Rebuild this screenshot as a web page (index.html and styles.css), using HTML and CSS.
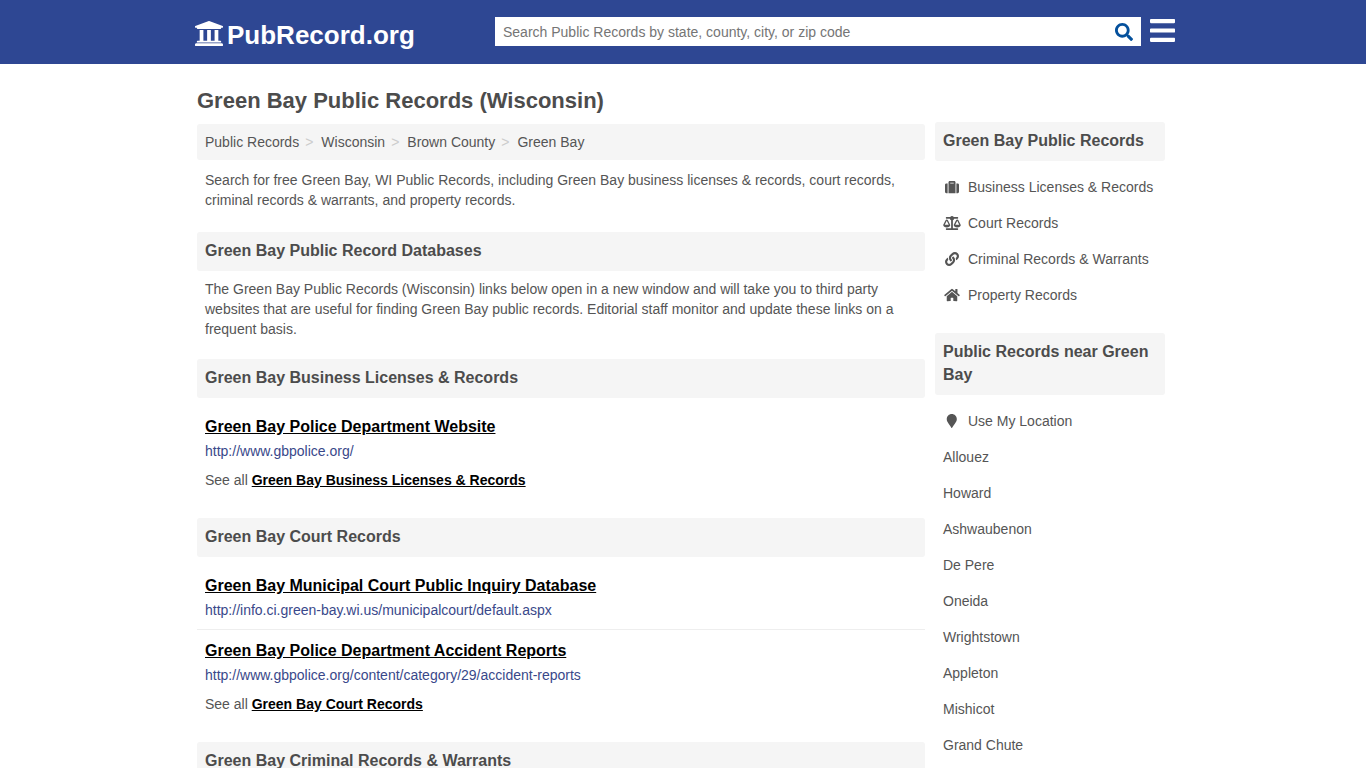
FILE: index.html
```html
<!DOCTYPE html>
<html lang="en">

<head>
	<meta charset="UTF-8">
	<meta name="viewport" content="width=device-width, initial-scale=1.0">
	<title>Green Bay Public Records (Wisconsin)</title>
	<link rel="stylesheet" href="styles.css">
</head>

<body>
	<!-- header -->
	<header class="top">
		<div class="top-in">
			<a class="logo" href="#">
				<svg class="logo-icon" viewBox="16 32 480 448" preserveAspectRatio="none"><path d="M496 128v16a8 8 0 0 1-8 8h-24v12c0 6.627-5.373 12-12 12H60c-6.627 0-12-5.373-12-12v-12H24a8 8 0 0 1-8-8v-16a8 8 0 0 1 4.941-7.392l232-88a7.996 7.996 0 0 1 6.118 0l232 88A8 8 0 0 1 496 128zm-24 304H40c-13.255 0-24 10.745-24 24v16a8 8 0 0 0 8 8h464a8 8 0 0 0 8-8v-16c0-13.255-10.745-24-24-24zM96 192v192H60c-6.627 0-12 5.373-12 12v20h416v-20c0-6.627-5.373-12-12-12h-36V192h-64v192h-64V192h-64v192h-64V192H96z"/></svg>
				<span class="logo-text">PubRecord.org</span>
			</a>
			<form class="search">
				<input class="search-input" type="text" placeholder="Search Public Records by state, county, city, or zip code">
				<svg class="search-icon" viewBox="0 0 512 512"><path d="M505 442.7L405.3 343c-4.5-4.5-10.6-7-17-7H372c27.6-35.3 44-79.7 44-128C416 93.1 322.9 0 208 0S0 93.1 0 208s93.1 208 208 208c48.3 0 92.7-16.4 128-44v16.3c0 6.4 2.5 12.5 7 17l99.7 99.7c9.4 9.4 24.6 9.4 33.9 0l28.3-28.3c9.4-9.4 9.4-24.6.1-34zM208 336c-70.7 0-128-57.2-128-128 0-70.7 57.2-128 128-128 70.7 0 128 57.2 128 128 0 70.7-57.2 128-128 128z"/></svg>
			</form>
			<svg class="menu-icon" viewBox="0 60 448 392" preserveAspectRatio="none"><path d="M16 132h416c8.837 0 16-7.163 16-16V76c0-8.837-7.163-16-16-16H16C7.163 60 0 67.163 0 76v40c0 8.837 7.163 16 16 16zm0 160h416c8.837 0 16-7.163 16-16v-40c0-8.837-7.163-16-16-16H16c-8.837 0-16 7.163-16 16v40c0 8.837 7.163 16 16 16zm0 160h416c8.837 0 16-7.163 16-16v-40c0-8.837-7.163-16-16-16H16c-8.837 0-16 7.163-16 16v40c0 8.837 7.163 16 16 16z"/></svg>
		</div>
	</header>

	<div class="page">
		<h1>Green Bay Public Records (Wisconsin)</h1>
		<div class="cols">
			<!-- left column -->
			<main class="main">
				<ul class="crumbs">
					<li><a href="#">Public Records</a></li>
					<li><a href="#">Wisconsin</a></li>
					<li><a href="#">Brown County</a></li>
					<li><a href="#">Green Bay</a></li>
				</ul>
				<p class="intro">Search for free Green Bay, WI Public Records, including Green Bay business licenses &amp; records, court records, criminal records &amp; warrants, and property records.</p>

				<h2 class="bar">Green Bay Public Record Databases</h2>
				<p class="intro intro-db">The Green Bay Public Records (Wisconsin) links below open in a new window and will take you to third party websites that are useful for finding Green Bay public records. Editorial staff monitor and update these links on a frequent basis.</p>

				<section class="group">
					<h2 class="bar">Green Bay Business Licenses &amp; Records</h2>
					<div class="item">
						<a class="item-title" href="#">Green Bay Police Department Website</a>
						<a class="item-url" href="#">http://www.gbpolice.org/</a>
					</div>
					<p class="see-all">See all <a href="#">Green Bay Business Licenses &amp; Records</a></p>
				</section>

				<section class="group">
					<h2 class="bar">Green Bay Court Records</h2>
					<div class="item">
						<a class="item-title" href="#">Green Bay Municipal Court Public Inquiry Database</a>
						<a class="item-url" href="#">http://info.ci.green-bay.wi.us/municipalcourt/default.aspx</a>
					</div>
					<div class="item">
						<a class="item-title" href="#">Green Bay Police Department Accident Reports</a>
						<a class="item-url" href="#">http://www.gbpolice.org/content/category/29/accident-reports</a>
					</div>
					<p class="see-all">See all <a href="#">Green Bay Court Records</a></p>
				</section>

				<section class="group">
					<h2 class="bar">Green Bay Criminal Records &amp; Warrants</h2>
				</section>
			</main>

			<!-- right column -->
			<aside class="side">
				<h3 class="bar">Green Bay Public Records</h3>
				<ul class="side-list">
					<li><span class="ico"><svg viewBox="0 0 512 512"><path d="M128 480h256V80c0-26.5-21.5-48-48-48H176c-26.5 0-48 21.5-48 48v400zm64-384h128v32H192V96zm320 80v256c0 26.5-21.5 48-48 48h-48V128h48c26.5 0 48 21.5 48 48zM96 480H48c-26.5 0-48-21.5-48-48V176c0-26.5 21.5-48 48-48h48v352z"/></svg></span><a href="#">Business Licenses &amp; Records</a></li>
					<li><span class="ico"><svg class="wide" viewBox="0 0 640 512"><path d="M256 336h-.02c0-16.18 1.34-8.73-85.05-181.51-17.65-35.29-68.19-35.36-85.87 0C-2.06 328.75.02 320.33.02 336H0c0 44.18 57.31 80 128 80s128-35.82 128-80zM128 176l72 144H56l72-144zm511.98 160c0-16.18 1.34-8.73-85.05-181.51-17.65-35.29-68.19-35.36-85.87 0-87.12 174.26-85.04 165.84-85.04 181.51H384c0 44.18 57.31 80 128 80s128-35.82 128-80h-.02zM440 320l72-144 72 144H440zm88 128H352V153.25c23.51-10.29 41.16-31.48 46.39-57.25H528c8.84 0 16-7.16 16-16V48c0-8.84-7.16-16-16-16H383.64C369.04 12.68 346.09 0 320 0s-49.04 12.68-63.64 32H112c-8.84 0-16 7.16-16 16v32c0 8.84 7.16 16 16 16h129.61c5.23 25.76 22.87 46.96 46.39 57.25V448H112c-8.84 0-16 7.16-16 16v32c0 8.84 7.16 16 16 16h416c8.84 0 16-7.16 16-16v-32c0-8.84-7.16-16-16-16z"/></svg></span><a href="#">Court Records</a></li>
					<li><span class="ico"><svg viewBox="0 0 512 512"><path d="M326.612 185.391c59.747 59.809 58.927 155.698.36 214.59-.11.12-.24.25-.36.37l-67.2 67.2c-59.27 59.27-155.699 59.262-214.96 0-59.27-59.26-59.27-155.7 0-214.96l37.106-37.106c9.84-9.84 26.786-3.3 27.294 10.606.648 17.722 3.826 35.527 9.69 52.721 1.986 5.822.567 12.262-3.783 16.612l-13.087 13.087c-28.026 28.026-28.905 73.66-1.155 101.96 28.024 28.579 74.086 28.749 102.325.51l67.2-67.19c28.191-28.191 28.073-73.757 0-101.83-3.701-3.694-7.429-6.564-10.341-8.569a16.037 16.037 0 0 1-6.947-12.606c-.396-10.567 3.348-21.456 11.698-29.806l21.054-21.055c5.521-5.521 14.182-6.199 20.584-1.731a152.482 152.482 0 0 1 20.522 17.197zM467.547 44.449c-59.261-59.262-155.69-59.27-214.96 0l-67.2 67.2c-.12.12-.25.25-.36.37-58.566 58.892-59.387 154.781.36 214.59a152.454 152.454 0 0 0 20.521 17.196c6.402 4.468 15.064 3.789 20.584-1.731l21.054-21.055c8.35-8.35 12.094-19.239 11.698-29.806a16.037 16.037 0 0 0-6.947-12.606c-2.912-2.005-6.64-4.875-10.341-8.569-28.073-28.073-28.191-73.639 0-101.83l67.2-67.19c28.239-28.239 74.3-28.069 102.325.51 27.75 28.3 26.872 73.934-1.155 101.96l-13.087 13.087c-4.35 4.35-5.769 10.79-3.783 16.612 5.864 17.194 9.042 34.999 9.69 52.721.509 13.906 17.454 20.446 27.294 10.606l37.106-37.106c59.271-59.259 59.271-155.699.001-214.959z"/></svg></span><a href="#">Criminal Records &amp; Warrants</a></li>
					<li><span class="ico"><svg class="wide" viewBox="0 0 576 512"><path d="M280.37 148.26L96 300.11V464a16 16 0 0 0 16 16l112.06-.29a16 16 0 0 0 15.92-16V368a16 16 0 0 1 16-16h64a16 16 0 0 1 16 16v95.64a16 16 0 0 0 16 16.05L464 480a16 16 0 0 0 16-16V300L295.67 148.26a12.19 12.19 0 0 0-15.3 0zM571.6 251.47L488 182.56V44.05a12 12 0 0 0-12-12h-56a12 12 0 0 0-12 12v72.61L318.47 43a48 48 0 0 0-61 0L4.34 251.47a12 12 0 0 0-1.6 16.9l25.5 31A12 12 0 0 0 45.15 301l235.22-193.74a12.19 12.19 0 0 1 15.3 0L530.9 301a12 12 0 0 0 16.9-1.6l25.5-31a12 12 0 0 0-1.7-16.93z"/></svg></span><a href="#">Property Records</a></li>
				</ul>

				<h3 class="bar">Public Records near Green Bay</h3>
				<ul class="side-list">
					<li><span class="ico"><svg viewBox="0 0 384 512"><path d="M172.268 501.67C26.97 291.031 0 262.413 0 184 0 82.379 82.379 0 184 0s184 82.379 184 184c0 78.413-26.97 107.031-172.268 317.67-9.535 13.774-29.93 13.773-39.464 0z"/></svg></span><a href="#">Use My Location</a></li>
					<li><a href="#">Allouez</a></li>
					<li><a href="#">Howard</a></li>
					<li><a href="#">Ashwaubenon</a></li>
					<li><a href="#">De Pere</a></li>
					<li><a href="#">Oneida</a></li>
					<li><a href="#">Wrightstown</a></li>
					<li><a href="#">Appleton</a></li>
					<li><a href="#">Mishicot</a></li>
					<li><a href="#">Grand Chute</a></li>
				</ul>
			</aside>
		</div>
	</div>
</body>

</html>
```

FILE: styles.css
```css
* {
	box-sizing: border-box;
}

html,
body {
	height: 768px;
	overflow: hidden;
}

body {
	margin: 0;
	font-family: "Liberation Sans", Arial, sans-serif;
	font-size: 14px;
	line-height: 20px;
	color: #555;
	background: #fff;
}

a {
	color: inherit;
	text-decoration: none;
}

ul {
	list-style: none;
	margin: 0;
	padding: 0;
}

/* header */

.top {
	height: 64px;
	background: #2e4793;
}

.top-in {
	display: flex;
	align-items: center;
	height: 64px;
	padding-left: 195px;
}

.logo {
	display: flex;
	align-items: center;
	width: 300px;
	color: #fff;
	font-size: 26px;
	font-weight: bold;
}

.logo-icon {
	width: 28px;
	height: 25px;
	margin-top: 2px;
	margin-right: 4px;
	fill: #fff;
}

.logo-text {
	margin-top: 6px;
}

.search {
	display: flex;
	align-items: center;
	width: 646px;
	height: 29px;
	margin-top: -2px;
	padding-right: 8px;
	background: #fff;
}

.search-input {
	flex: 1;
	height: 29px;
	padding: 2px 8px 0;
	border: 0;
	outline: 0;
	background: transparent;
	font-family: inherit;
	font-size: 14px;
	color: #555;
}

.search-input::placeholder {
	color: #757575;
	opacity: 1;
}

.search-icon {
	width: 18px;
	height: 18px;
	margin-top: 1px;
	fill: #04509c;
}

.menu-icon {
	width: 25px;
	height: 23px;
	margin: -3px 0 0 9px;
	fill: #fff;
}

/* page */

.page {
	width: 968px;
	margin-left: 197px;
}

h1 {
	margin: 0;
	padding: 24px 0 10px;
	font-size: 22px;
	line-height: 26px;
	color: #4c4c4c;
}

.cols {
	display: flex;
	gap: 10px;
}

.main {
	width: 728px;
}

.side {
	width: 230px;
	margin-top: -2px;
}

.bar {
	margin: 0;
	padding: 7px 8px 9px;
	border-radius: 3px;
	background: #f5f5f5;
	font-size: 16px;
	line-height: 23px;
	font-weight: bold;
	color: #4c4c4c;
}

.crumbs {
	display: flex;
	height: 36px;
	align-items: center;
	padding: 0 8px;
	border-radius: 3px;
	background: #f5f5f5;
}

.crumbs li + li:before {
	content: ">";
	padding: 0 8px 0 6px;
	color: #ccc;
}

.intro {
	margin: 0;
	padding: 10px 8px 22px;
}

.intro-db {
	padding: 8px 8px 20px;
}

.group {
	margin-bottom: 20px;
}

.item {
	padding: 17px 8px 9px;
	border-bottom: 1px solid #eee;
}

.item + .item {
	padding-top: 9px;
}

.item-title {
	display: block;
	font-size: 16px;
	line-height: 24px;
	font-weight: bold;
	color: #000;
	text-decoration: underline;
}

.item-url {
	display: block;
	margin-top: 2px;
	color: #39488a;
}

.see-all {
	margin: 0;
	padding: 9px 8px 8px;
}

.item:has(+ .see-all) {
	border-bottom: 0;
	padding-bottom: 0;
}

.see-all a {
	font-weight: bold;
	color: #000;
	text-decoration: underline;
}

/* sidebar */

.side-list {
	padding: 8px 0 20px;
}

.side-list li {
	display: flex;
	align-items: center;
	height: 36px;
	padding-left: 8px;
}

.ico {
	display: flex;
	justify-content: center;
	width: 18px;
	margin-right: 7px;
}

.ico svg {
	height: 14px;
	width: 14px;
	fill: #555;
}

.ico svg.wide {
	width: 18px;
}
```
